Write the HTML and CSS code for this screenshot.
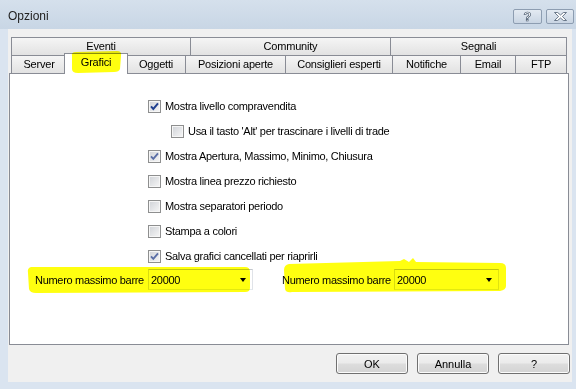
FILE: index.html
```html
<!DOCTYPE html>
<html lang="it">
<head>
  <meta charset="utf-8" />
  <title>Opzioni</title>
  <link rel="stylesheet" href="styles.css">
</head>
<body>
  <div class="window">
    <!-- barra del titolo -->
    <div class="titlebar">
      <span class="title">Opzioni</span>
      <div class="caption-btns">
        <span class="cap-btn help">?</span>
        <span class="cap-btn close">
          <svg width="13" height="9" viewBox="0 0 13 9">
            <polygon points="0.5,0.5 3.6,0.5 6.5,3 9.4,0.5 12.5,0.5 8.4,4.5 12.5,8.5 9.4,8.5 6.5,6 3.6,8.5 0.5,8.5 4.6,4.5" fill="#fff" stroke="#4a5a6e" stroke-width="0.8" />
          </svg>
        </span>
      </div>
    </div>

    <div class="frame">
      <div class="client">
        <!-- schede -->
        <div class="tabs">
          <div class="tab-row row-top">
            <div class="tab">Eventi</div>
            <div class="tab">Community</div>
            <div class="tab">Segnali</div>
          </div>
          <div class="tab-row row-bottom">
            <div class="tab">Server</div>
            <div class="tab selected">Grafici</div>
            <div class="tab">Oggetti</div>
            <div class="tab">Posizioni aperte</div>
            <div class="tab">Consiglieri esperti</div>
            <div class="tab">Notifiche</div>
            <div class="tab">Email</div>
            <div class="tab">FTP</div>
          </div>
        </div>

        <!-- pannello Grafici -->
        <div class="panel">
          <div class="checks">
            <div class="check"><span class="box focus"><svg viewBox="0 0 11 11"><path d="M2 5.4 L4.3 7.9 L9 2.4" /></svg></span>Mostra livello compravendita</div>
            <div class="check indent"><span class="box"></span>Usa il tasto 'Alt' per trascinare i livelli di trade</div>
            <div class="check"><span class="box"><svg viewBox="0 0 11 11"><path d="M2 5.4 L4.3 7.9 L9 2.4" /></svg></span>Mostra Apertura, Massimo, Minimo, Chiusura</div>
            <div class="check"><span class="box"></span>Mostra linea prezzo richiesto</div>
            <div class="check"><span class="box"></span>Mostra separatori periodo</div>
            <div class="check"><span class="box"></span>Stampa a colori</div>
            <div class="check"><span class="box"><svg viewBox="0 0 11 11"><path d="M2 5.4 L4.3 7.9 L9 2.4" /></svg></span>Salva grafici cancellati per riaprirli</div>
          </div>

          <div class="bars">
            <span class="bars-label">Numero massimo barre</span>
            <div class="combo"><span>20000</span><span class="arrow"></span></div>
            <span class="bars-label second">Numero massimo barre</span>
            <div class="combo"><span>20000</span><span class="arrow"></span></div>
          </div>
        </div>

        <!-- pulsanti -->
        <div class="actions">
          <button class="btn">OK</button>
          <button class="btn">Annulla</button>
          <button class="btn">?</button>
        </div>
      </div>
    </div>

    <!-- evidenziatore giallo sopra la finestra -->
    <svg class="marker" width="576" height="389" viewBox="0 0 576 389">
      <path d="M72 56 Q71 52 76 52 L117 51 Q122 51 121 56 L120 69 Q119 72 114 72 L78 73 Q72 73 72 69 Z" />
      <path d="M31 267 Q27 268 28 273 L29 289 Q30 293 36 293 L245 292 Q250 292 250 288 L250 272 Q250 267 245 267 Z" />
      <path d="M289 264 Q284 265 284 270 L285 289 Q286 293 292 292 L500 291 Q506 290 506 286 L506 268 Q506 263 500 263 L416 262 L413 258 L409 262 L404 259 L400 261 Z" />
    </svg>
  </div>
</body>
</html>
```

FILE: styles.css
```css
body {
  margin: 0;
  font-family: "Liberation Sans", Arial, sans-serif;
  font-size: 11px;
  color: #000;
}

.window {
  position: relative;
  width: 576px;
  height: 389px;
  display: flex;
  flex-direction: column;
  background: #dae4f0;
  overflow: hidden;
}

.titlebar {
  height: 29px;
  display: flex;
  justify-content: space-between;
  align-items: flex-start;
  background: linear-gradient(to bottom, #d5e0ec, #c8d6e5);
}
.title {
  margin: 9px 0 0 8px;
  font-size: 12px;
  line-height: 15px;
  color: #222;
}
.caption-btns {
  display: flex;
  gap: 4px;
  margin: 9px 2px 0 0;
}
.cap-btn {
  width: 29px;
  height: 15px;
  box-sizing: border-box;
  border: 1px solid #8d9db1;
  border-radius: 2px;
  background: linear-gradient(to bottom, #e3eaf2, #c9d5e3);
  display: flex;
  align-items: center;
  justify-content: center;
}
.cap-btn.close {
  width: 28px;
}
.cap-btn.help {
  font-size: 13px;
  font-weight: bold;
  line-height: 13px;
  color: #fff;
  -webkit-text-stroke: 0.7px #4a5a6e;
}

.frame {
  flex: 1;
  padding: 0 4px 7px 8px;
}
.client {
  height: 353px;
  box-sizing: border-box;
  padding: 8px 2px 0 1px;
  background: #f0f0f0;
}

/* schede */
.tabs {
  width: 556px;
  margin-left: 2px;
  letter-spacing: -0.2px;
}
.tab-row {
  display: grid;
  height: 18px;
}
.row-top {
  grid-template-columns: 179px 200px 177px;
}
.row-bottom {
  grid-template-columns: 55px 60px 59px 100px 107px 68px 55px 52px;
}
.tab {
  box-sizing: border-box;
  border: 1px solid #898c95;
  border-right: none;
  border-bottom: none;
  background: linear-gradient(to bottom, #f5f5f5, #e2e2e2);
  text-align: center;
  line-height: 17px;
  white-space: nowrap;
}
.tab:last-child {
  border-right: 1px solid #898c95;
}
.tab.selected {
  position: relative;
  z-index: 1;
  margin: -2px -2px -1px;
  border-right: 1px solid #898c95;
  background: #fff;
}

/* pannello */
.panel {
  width: 560px;
  height: 272px;
  box-sizing: border-box;
  border: 1px solid #898c95;
  background: #fff;
  padding-top: 26px;
  letter-spacing: -0.3px;
}
.checks {
  display: flex;
  flex-direction: column;
  gap: 12px;
  margin-left: 138px;
}
.check {
  display: flex;
  align-items: center;
  gap: 4px;
  height: 13px;
  line-height: 13px;
  white-space: nowrap;
}
.check.indent {
  margin-left: 23px;
}
.box {
  flex: none;
  width: 13px;
  height: 13px;
  box-sizing: border-box;
  border: 1px solid #8e8f8f;
  background: linear-gradient(135deg, #cfd2d7, #f7f7f7);
  box-shadow: inset 0 0 0 1px #f6f6f6;
}
.box svg {
  display: block;
  width: 11px;
  height: 11px;
}
.box path {
  fill: none;
  stroke: #5a6ea6;
  stroke-width: 1.9;
}
.box.focus path {
  stroke: #1f3f8f;
  stroke-width: 2;
}

.bars {
  display: flex;
  align-items: center;
  margin-top: 6px;
  padding-left: 25px;
}
.bars-label {
  width: 113px;
  white-space: nowrap;
}
.bars-label.second {
  width: 112px;
  margin-left: 29px;
}
.combo {
  width: 105px;
  height: 21px;
  box-sizing: border-box;
  display: flex;
  align-items: center;
  padding-left: 2px;
  border: 1px solid;
  border-color: #c3c7cd #e0e3e8 #e3e9ef #d9dce2;
  background: #fff;
}
.arrow {
  margin-left: auto;
  margin-right: 6px;
  border-left: 3.5px solid transparent;
  border-right: 3.5px solid transparent;
  border-top: 4px solid #000;
}

/* pulsanti */
.actions {
  display: flex;
  justify-content: flex-end;
  gap: 9px;
  margin-top: 8px;
}
.btn {
  width: 72px;
  height: 21px;
  padding: 0;
  font-family: inherit;
  font-size: 11px;
  color: #000;
  border: 1px solid #707070;
  border-radius: 3px;
  background: linear-gradient(to bottom, #f2f2f2 0%, #ebebeb 48%, #dddddd 52%, #d3d3d3 100%);
  box-shadow: inset 0 0 0 1px #fbfbfb;
}

.marker {
  position: absolute;
  left: 0;
  top: 0;
  z-index: 2;
  pointer-events: none;
  mix-blend-mode: multiply;
}
.marker path {
  fill: #ffff10;
}
```
